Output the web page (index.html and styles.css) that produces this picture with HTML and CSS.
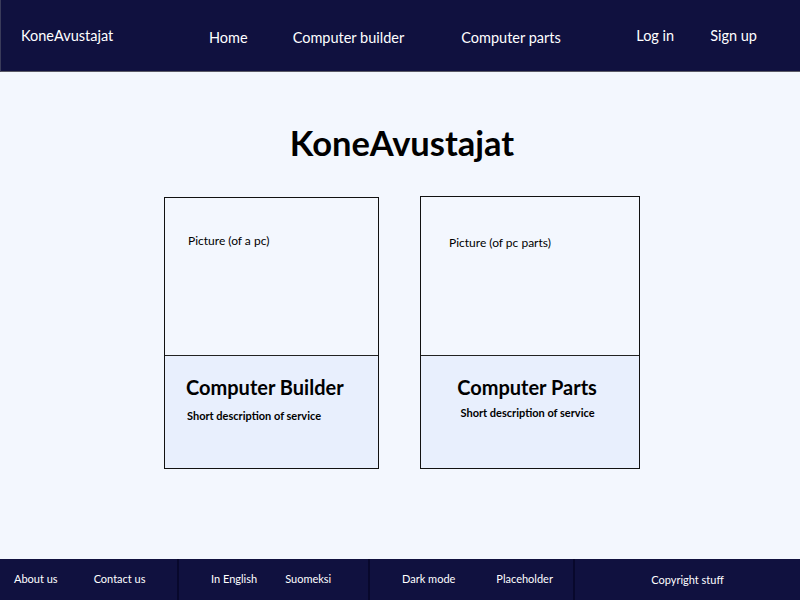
FILE: index.html
```
<!DOCTYPE html>
<html lang="fi">
<head>
<meta charset="utf-8">
<title>KoneAvustajat</title>
<link rel="stylesheet" href="styles.css">
</head>
<body>
<header class="topbar">
  <div class="brand">KoneAvustajat</div>
  <nav class="mainnav">
    <a class="nav-home" href="#">Home</a>
    <a class="nav-builder" href="#">Computer builder</a>
    <a class="nav-parts" href="#">Computer parts</a>
  </nav>
  <nav class="authnav">
    <a href="#">Log in</a>
    <a href="#">Sign up</a>
  </nav>
</header>
<main class="content">
  <h1 class="title">KoneAvustajat</h1>
  <div class="cards">
    <div class="card card-builder">
      <div class="card-pic"><span class="pic-label">Picture (of a pc)</span></div>
      <div class="card-body">
        <h2 class="card-title">Computer Builder</h2>
        <p class="card-desc">Short description of service</p>
      </div>
    </div>
    <div class="card card-parts">
      <div class="card-pic"><span class="pic-label">Picture (of pc parts)</span></div>
      <div class="card-body centered">
        <h2 class="card-title">Computer Parts</h2>
        <p class="card-desc">Short description of service</p>
      </div>
    </div>
  </div>
</main>
<footer class="footer">
  <div class="fsec fsec-1"><a href="#">About us</a><a href="#">Contact us</a></div>
  <div class="fsec fsec-2"><a href="#">In English</a><a href="#">Suomeksi</a></div>
  <div class="fsec fsec-3"><a href="#">Dark mode</a><a href="#">Placeholder</a></div>
  <div class="fsec fsec-4"><span>Copyright stuff</span></div>
</footer>
</body>
</html>
```
FILE: styles.css
```
* { box-sizing: border-box; }
html, body { margin: 0; padding: 0; }
body {
  font-family: Lato, "Open Sans", sans-serif;
  background: #f3f7fe;
  color: #000;
  min-height: 600px;
  display: flex;
  flex-direction: column;
}
a { color: inherit; text-decoration: none; }

.topbar {
  height: 72px;
  padding-top: 2px;
  background: #10113f;
  border-bottom: 1px solid #5a5a66;
  border-left: 1px solid #3a3b5a;
  color: #fff;
  display: flex;
  align-items: center;
  font-size: 14.5px;
}
.brand { margin-left: 20px; width: 188px; margin-top: -2px; }
.mainnav { display: flex; align-items: center; margin-top: 2px; }
.nav-builder { margin-left: 45px; }
.nav-parts { margin-left: 57px; }
.authnav {
  margin-left: auto;
  margin-right: 43px;
  display: flex;
  gap: 36px;
  margin-top: -2px;
}

.content {
  flex: 1;
  display: flex;
  flex-direction: column;
  align-items: center;
  padding-top: 51px;
}
.title {
  margin: 0 0 0 4px;
  font-size: 34.5px;
  line-height: 40px;
  font-weight: 700;
}
.cards {
  margin-top: 34px;
  margin-left: 4px;
  display: flex;
  gap: 41px;
  align-items: flex-start;
}
.card {
  border: 1px solid #111;
  display: flex;
  flex-direction: column;
}
.card-builder { width: 215px; height: 272px; }
.card-parts { width: 220px; height: 273px; margin-top: -1px; }
.card-pic {
  height: 158px;
  border-bottom: 1px solid #222;
  font-size: 12px;
}
.card-builder .card-pic { padding: 35px 0 0 23px; }
.card-parts .card-pic { height: 159px; padding: 38px 0 0 28px; }
.card-body {
  flex: 1;
  background: #e8effd;
  padding: 19px 0 0 21px;
}
.card-body.centered { padding: 19px 0 0 0; text-align: center; }
.card-parts .card-body .card-title { margin-right: 6px; }
.card-parts .card-body .card-desc { margin-top: 7px; margin-right: 6px; }
.card-title {
  margin: 0;
  font-size: 20px;
  line-height: 24px;
  font-weight: 700;
}
.card-desc {
  margin: 10px 0 0 1px;
  font-size: 11px;
  font-weight: 700;
}

.footer {
  height: 41px;
  background: #10113f;
  color: #fff;
  display: flex;
  font-size: 11px;
}
.fsec {
  display: flex;
  align-items: center;
  border-right: 2px solid #08082c;
  padding-bottom: 2px;
}
.fsec-1 { width: 179px; padding-left: 14px; gap: 36px; }
.fsec-2 { width: 191px; padding-left: 32px; gap: 28px; }
.fsec-3 { width: 205px; padding-left: 32px; gap: 41px; }
.fsec-4 { flex: 1; border-right: none; justify-content: center; padding-top: 2px; padding-right: 0; }
```
